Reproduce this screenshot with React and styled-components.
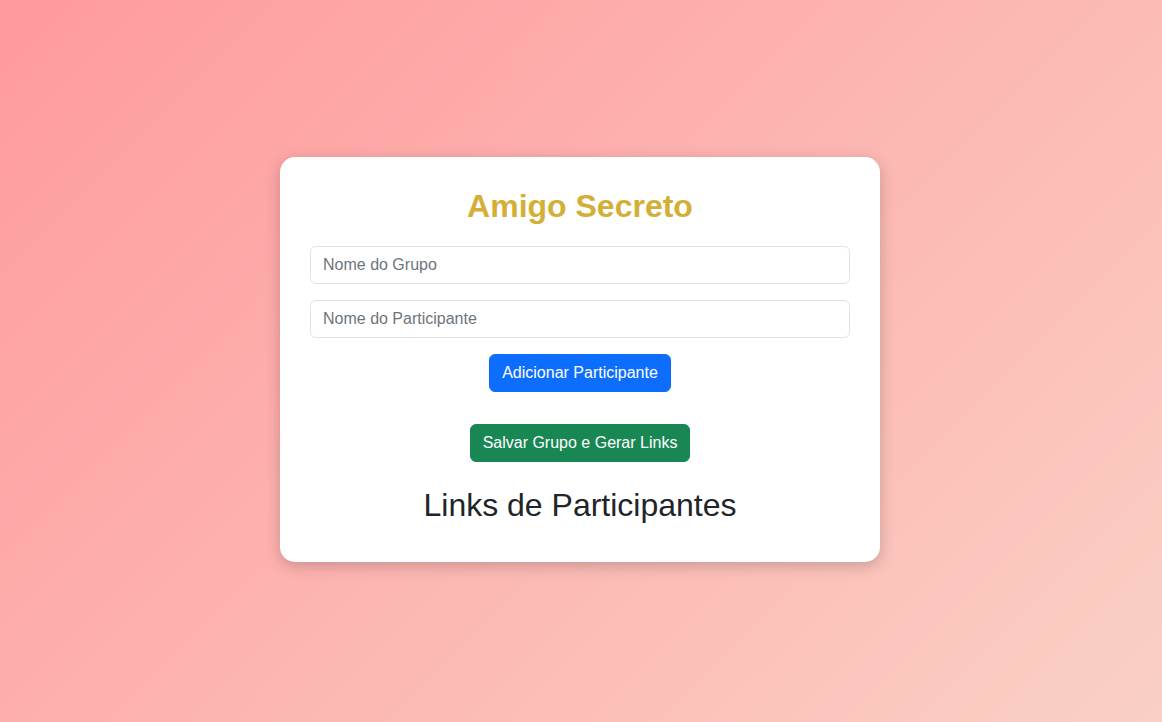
import styled, { createGlobalStyle } from "styled-components";

const GlobalStyle = createGlobalStyle`
  * {
    box-sizing: border-box;
  }

  html, body {
    margin: 0;
    padding: 0;
  }

  body {
    font-family: "Liberation Sans", Arial, sans-serif;
    font-size: 16px;
    line-height: 1.5;
    color: #212529;
  }
`;

const Page = styled.div`
  min-height: 100vh;
  padding: 0 2px 3px 0;
  display: flex;
  justify-content: center;
  align-items: center;
  background: linear-gradient(135deg, #ff9a9e 0%, #fad0c4 100%);
`;

const Card = styled.div`
  width: 600px;
  background-color: #fff;
  border-radius: 15px;
  padding: 30px;
  box-shadow: 0 4px 15px rgba(0, 0, 0, 0.2);
  display: flex;
  flex-direction: column;
  align-items: center;
`;

const Title = styled.h1`
  margin: 0 0 20px;
  font-size: 32px;
  line-height: 1.2;
  font-weight: 700;
  color: #d4af37;
  text-align: center;
`;

const Input = styled.input`
  width: 100%;
  height: 38px;
  padding: 6px 12px;
  margin-bottom: 16px;
  font-family: inherit;
  font-size: 16px;
  color: #212529;
  background: #fff;
  border: 1px solid #dee2e6;
  border-radius: 6px;

  &::placeholder {
    color: #6c757d;
  }

  &:focus {
    outline: none;
  }
`;

const Button = styled.button`
  height: 38px;
  padding: 6px 12px;
  margin-top: ${(p) => p.$top || 0}px;
  font-family: inherit;
  font-size: 16px;
  line-height: 1.5;
  color: #fff;
  background-color: ${(p) => p.$color};
  border: 1px solid ${(p) => p.$color};
  border-radius: 6px;
  cursor: pointer;
`;

const Subtitle = styled.h2`
  margin: 24px 0 8px;
  font-size: 32px;
  line-height: 1.2;
  font-weight: 400;
  color: #212529;
  text-align: center;
`;

export default function App() {
  return (
    <>
      <GlobalStyle />
      <Page>
        <Card>
          <Title>Amigo Secreto</Title>
          <Input type="text" placeholder="Nome do Grupo" />
          <Input type="text" placeholder="Nome do Participante" />
          <Button $color="#0d6efd">Adicionar Participante</Button>
          <Button $color="#198754" $top={32}>
            Salvar Grupo e Gerar Links
          </Button>
          <Subtitle>Links de Participantes</Subtitle>
        </Card>
      </Page>
    </>
  );
}
